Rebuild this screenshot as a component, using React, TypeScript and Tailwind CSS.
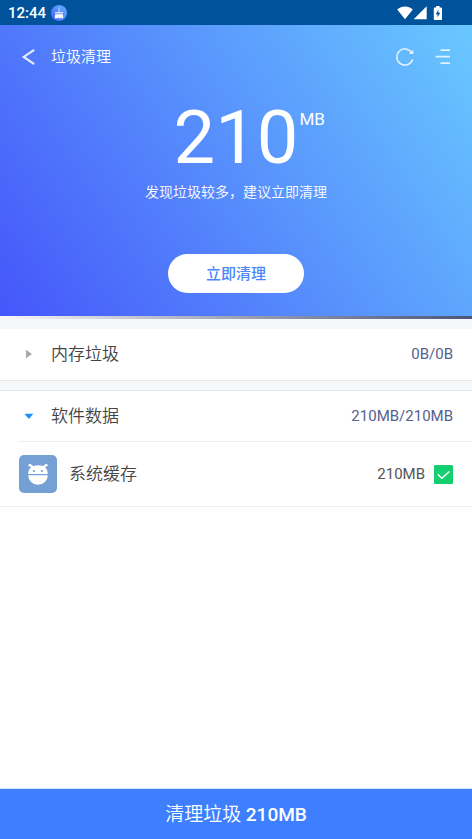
import { useState } from 'react';

const TOTAL_SIZE = '210';

function StatusBar() {
    return (
        <div className="flex h-[25px] items-center justify-between bg-[#00539a] pl-2 pr-7 text-white">
            <div className="flex items-center gap-[5px]">
                <span className="pt-px text-[15px] font-medium leading-6">12:44</span>
                <svg className="size-4" viewBox="0 0 16 16" aria-hidden="true">
                    <defs>
                        <linearGradient id="badge" x1="1" y1="0" x2="0" y2="1">
                            <stop offset="0" stopColor="#62b4ff" />
                            <stop offset="1" stopColor="#4660f8" />
                        </linearGradient>
                    </defs>
                    <circle cx="8" cy="8" r="8" fill="url(#badge)" />
                    <path d="M7.500 2.500h1V7h3.500v1.600h-8V7h3.500z" fill="#d3e0ff" />
                    <path d="M4.300 9.300h7.400l.6 3.900h-1.500l-.4-1.600-.2 1.600H7.600l-.3-1.300-.4 1.300H3.700z" fill="#fff" />
                </svg>
            </div>
            <div className="flex items-center">
                <svg className="h-[14px] w-4" viewBox="0 0 16 14" fill="currentColor" aria-hidden="true">
                    <path d="M.2 3.600C2.400 1.500 5.200.5 8 .5s5.600 1 7.800 3.100L8 13.300z" />
                </svg>
                <svg className="h-[14px] w-[14px]" viewBox="0 0 14 14" fill="currentColor" aria-hidden="true">
                    <path d="M13.700.2v13H.7z" />
                </svg>
                <svg className="ml-[6px] mr-px h-[14px] w-[10px]" viewBox="0 0 10 14" aria-hidden="true">
                    <path d="M3.200 0h3.400v1.400h1.400c.6 0 1 .4 1 1v10.600c0 .6-.4 1-1 1H1.800c-.6 0-1-.4-1-1V2.400c0-.6.4-1 1-1h1.400z" fill="#fff" />
                    <path d="M5.400 3.800 2.700 8.200h1.800v3l2.800-4.400H5.400z" fill="#00539a" />
                </svg>
            </div>
        </div>
    )
}

function Header() {
    return (
        <header className="flex h-[63px] items-center justify-between pl-5 pr-[21px]">
            <div className="flex items-center gap-[13px]">
                <button type="button" aria-label="返回">
                    <svg className="h-5 w-[18px]" viewBox="0 0 18 20" fill="none" stroke="#e6ebff" strokeWidth="2.200" aria-hidden="true">
                        <path d="M14.200 2.800 3.700 9.900l10.500 7.200" />
                    </svg>
                </button>
                <h1 className="text-[15px] font-[350] leading-5">垃圾清理</h1>
            </div>
            <div className="flex items-center gap-5">
                <button type="button" aria-label="刷新">
                    <svg className="size-5" viewBox="0 0 20 20" fill="none" stroke="#e3f2ff" strokeWidth="1.500" aria-hidden="true">
                        <path d="M17.700 12.300A8.100 8.100 0 1 1 16.700 5.500" />
                        <path d="M14.600 6.300h3V3.600" />
                        <path d="M15.800 4.600h1.800v1.700h-1.800z" fill="#e3f2ff" stroke="none" />
                    </svg>
                </button>
                <button type="button" aria-label="菜单">
                    <svg className="h-5 w-4" viewBox="0 0 16 20" fill="none" stroke="#e3f2ff" strokeWidth="1.600" aria-hidden="true">
                        <path d="M5.500 3.100H15M.5 9.600H15M5.500 16.100H15" />
                    </svg>
                </button>
            </div>
        </header>
    )
}

function Summary() {
    return (
        <section className="flex flex-col items-center pb-[23px]">
            <div className="mt-[9px] grid w-full grid-cols-[1fr_auto_1fr]">
                <span />
                <span className="pt-px text-[74px] leading-20">{TOTAL_SIZE}</span>
                <span className="pt-3 pl-px text-[17px] leading-5">MB</span>
            </div>
            <p className="mt-1 text-[14px] font-[350] leading-5">发现垃圾较多，建议立即清理</p>
            <button type="button" className="mt-[52px] h-[39px] w-[136px] rounded-full bg-white pt-[2px] text-[15px] font-medium text-[#4b86fc]">
                立即清理
            </button>
        </section>
    )
}

type GroupProps = {
    title: string;
    size: string;
    isOpen: boolean;
    onToggle: () => void;
}

function GroupRow({ title, size, isOpen, onToggle }: GroupProps) {
    return (
        <button type="button" aria-expanded={isOpen} onClick={onToggle} className="flex h-[50px] w-full items-center pl-6 pr-[19px] text-left">
            <svg className="size-[10px]" viewBox="0 0 10 10" aria-hidden="true">
                {isOpen
                    ? <path d="M.5 2.700h8.800L4.900 7.900z" fill="#1b91fb" />
                    : <path d="M2 .8v8.400l6-4.200z" fill="#aaa" />}
            </svg>
            <span className="ml-[17px] flex-1 text-[17px] font-[350] leading-6 text-[#444]">{title}</span>
            <span className="text-[15px] leading-6 text-[#566090]">{size}</span>
        </button>
    )
}

function CacheRow() {
    const [checked, setChecked] = useState(true);

    return (
        <label className="flex h-16 items-center px-[19px]">
            <svg className="size-[38px]" viewBox="0 0 38 38" aria-hidden="true">
                <rect width="38" height="38" rx="5" fill="#74a0d5" />
                <g fill="#fff">
                    <path d="M9.200 18.900c0-2.700 1-5 2.900-6.600l-2.200-2.200 1.500-1.100 2.800 2.100c3-1.200 7-1.200 10 0L26.600 9l1.500 1.100-2 2.200c1.800 1.600 2.700 3.900 2.700 6.600z" />
                    <path d="M9.200 20.200h19.600a9.800 9.600 0 0 1-19.600 0z" />
                    <circle cx="10.700" cy="10.200" r="1.300" />
                    <circle cx="27.300" cy="10.200" r="1.300" />
                </g>
                <circle cx="15" cy="16" r="1.100" fill="#74a0d5" />
                <circle cx="22.900" cy="16" r="1.100" fill="#74a0d5" />
            </svg>
            <span className="ml-3 flex-1 text-[17px] font-[350] leading-6 text-[#444]">系统缓存</span>
            <span className="text-[15px] leading-6 text-[#555]">210MB</span>
            <span className="relative ml-[9px] size-[19px]">
                <input
                    type="checkbox" checked={checked}
                    onChange={(e) => setChecked(e.target.checked)}
                    className="block size-[19px] appearance-none rounded-[1px] border border-gray-300 checked:border-[#14cf70] checked:bg-[#14cf70]"
                />
                {checked && (
                    <svg className="pointer-events-none absolute inset-0 size-[19px]" viewBox="0 0 19 19" fill="none" stroke="#fff" strokeWidth="1.500" aria-hidden="true">
                        <path d="m3.800 9.300 4 4 7.600-6.800" />
                    </svg>
                )}
            </span>
        </label>
    )
}

export default function App() {
    const [memoryOpen, setMemoryOpen] = useState(false);
    const [dataOpen, setDataOpen] = useState(true);

    return (
        <div className="flex min-h-screen flex-col bg-white font-[Roboto,'Noto_Sans_CJK_SC',sans-serif]">
            <StatusBar />
            <div className="bg-linear-[56deg] from-[#4556fa] to-[#69c8ff] text-white">
                <Header />
                <Summary />
            </div>
            <div className="h-[3px] bg-linear-to-r from-[#f7f8fa] to-[#4c5678]" />
            <main className="flex-1">
                <div className="h-[10px] bg-[#f6f7f9]" />
                <div className="pb-px">
                    <GroupRow title="内存垃圾" size="0B/0B" isOpen={memoryOpen} onToggle={() => setMemoryOpen(!memoryOpen)} />
                </div>
                <div className="h-[11px] border-y border-[#e6e7e9] bg-[#f6f7f9]" />
                <GroupRow title="软件数据" size="210MB/210MB" isOpen={dataOpen} onToggle={() => setDataOpen(!dataOpen)} />
                {dataOpen && (
                    <>
                        <hr className="ml-[19px] border-[#ececec]" />
                        <CacheRow />
                    </>
                )}
                <hr className="border-[#efefef]" />
            </main>
            <button type="button" className="h-[51px] border-t border-[#d5e3ff] bg-[#3d7fff] pt-[2px] text-[19px] font-[350] text-white">
                清理垃圾 <span className="font-medium">210MB</span>
            </button>
        </div>
    )
}
